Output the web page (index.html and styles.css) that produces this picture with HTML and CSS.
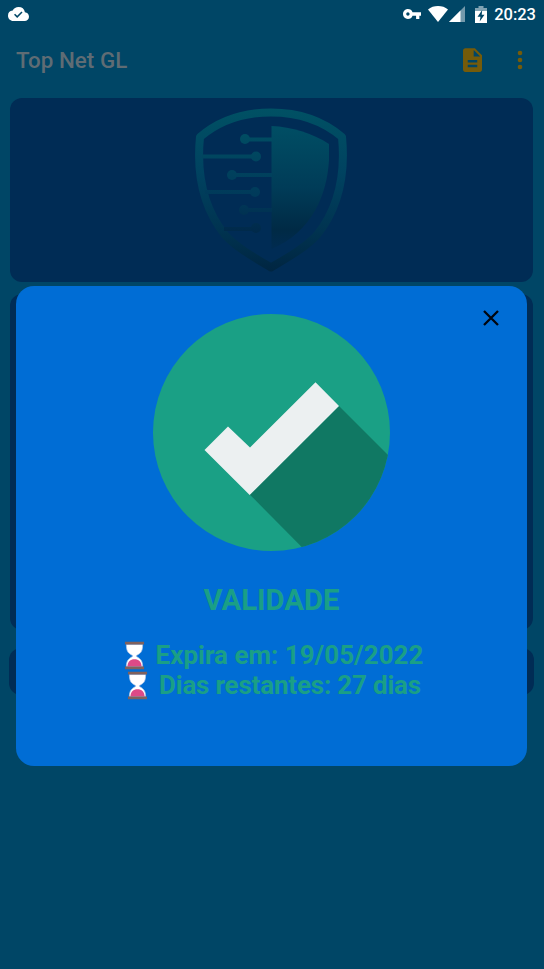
FILE: index.html
```
<!DOCTYPE html>
<html lang="pt">
<head>
    <meta charset="UTF-8">
    <meta name="viewport" content="width=device-width, initial-scale=1.0">
    <title>Top Net GL</title>
    <link rel="stylesheet" href="styles.css">
</head>
<body>
    <div class="status-bar">
        <svg class="cloud" viewBox="0 0 24 16"><path fill="#fff" d="M19.35 6.04A7.49 7.49 0 0 0 12 0C9.11 0 6.6 1.64 5.35 4.04A5.994 5.994 0 0 0 0 10c0 3.31 2.69 6 6 6h13c2.76 0 5-2.24 5-5 0-2.64-2.05-4.78-4.65-4.96z"/><path d="M7.5 8.3l3 3 5.5-5.5" fill="none" stroke="#004666" stroke-width="1.7"/></svg>
        <div class="status-icons">
            <svg class="key" viewBox="1 6 22 12"><path fill="#fff" d="M12.65 10A5.99 5.99 0 0 0 7 6c-3.31 0-6 2.69-6 6s2.69 6 6 6a5.99 5.99 0 0 0 5.65-4H17v4h4v-4h2v-4H12.65zM7 14c-1.1 0-2-.9-2-2s.9-2 2-2 2 .9 2 2-.9 2-2 2z"/></svg>
            <svg class="wifi" viewBox="0 0 20 16"><path fill="#fff" d="M10 16L0 3.4C2.8 1.2 6.2 0 10 0s7.2 1.2 10 3.4z"/></svg>
            <svg class="signal" viewBox="0 0 16 16"><path fill="#fff" fill-opacity=".45" d="M0 16L16 0v16z"/><path fill="#fff" d="M0 16L11.5 4.5V16z"/></svg>
            <svg class="battery" viewBox="0 0 12 17"><path fill="#fff" fill-opacity=".5" d="M0 2h3.500V0h5v2H12v3H0z"/><path fill="#fff" d="M0 5h12v12H0z"/><path fill="#004666" d="M7.200 4L2.500 10.800h3L4.700 15.500 9.500 8.800H6.700z"/></svg>
            <span class="clock">20:23</span>
        </div>
    </div>

    <div class="toolbar">
        <h1>Top Net GL</h1>
        <svg class="doc" viewBox="4 2 16 20"><path fill="#755b0a" d="M14 2H6c-1.1 0-1.990.9-1.990 2L4 20c0 1.100.89 2 1.990 2H18c1.100 0 2-.9 2-2V8l-6-6zm2 16H8v-2h8v2zm0-4H8v-2h8v2zm-3-5V3.500L18.500 9H13z"/></svg>
        <svg class="more" viewBox="0 0 6 20"><g fill="#755b0a"><circle cx="3" cy="3" r="2.300"/><circle cx="3" cy="10" r="2.300"/><circle cx="3" cy="17" r="2.300"/></g></svg>
    </div>

    <div class="cards">
        <div class="card logo-card">
            <svg class="shield" viewBox="190 104 162 170">
                <defs>
                    <linearGradient id="fade" gradientUnits="userSpaceOnUse" x1="0" y1="108" x2="0" y2="272">
                        <stop offset="0" stop-color="#005164"/>
                        <stop offset=".4" stop-color="#004260"/>
                        <stop offset=".75" stop-color="#003350"/>
                        <stop offset="1" stop-color="#002541"/>
                    </linearGradient>
                    <linearGradient id="half" gradientUnits="userSpaceOnUse" x1="0" y1="126" x2="0" y2="248">
                        <stop offset="0" stop-color="#004e64"/>
                        <stop offset=".5" stop-color="#003c58"/>
                        <stop offset=".85" stop-color="#002a45"/>
                        <stop offset="1" stop-color="#002b50"/>
                    </linearGradient>
                    <linearGradient id="lines" gradientUnits="userSpaceOnUse" x1="0" y1="135" x2="0" y2="235">
                        <stop offset="0" stop-color="#004c62"/>
                        <stop offset=".6" stop-color="#003a5a"/>
                        <stop offset="1" stop-color="#002849"/>
                    </linearGradient>
                </defs>
                <path fill="none" stroke="url(#fade)" stroke-width="8" stroke-linejoin="round" d="M271 112.500C245 112.500 220 120 200 137C197 168 201 205 225 235C237 248 255 258 271 267.500C287 258 305 248 317 235C341 205 345 168 342 137C322 120 297 112.500 271 112.500z"/>
                <path fill="url(#half)" d="M271.500 126C292 127 312 133 329 144V160C327 195 312 232 271.500 249z"/>
                <g fill="url(#lines)">
                    <circle cx="245" cy="139" r="5"/><path d="M245 137.500h27v4h-27z"/>
                    <circle cx="256" cy="156.500" r="5"/><path d="M202 154.500h54v4h-54z"/>
                    <circle cx="232" cy="175" r="5"/><path d="M232 173h40v4h-40z"/>
                    <circle cx="255" cy="192" r="5"/><path d="M205 190h50v4h-50z"/>
                    <circle cx="244" cy="210" r="5"/><path d="M244 208h28v4h-28z"/>
                    <circle cx="256" cy="228" r="5"/><path d="M224 227h32v4h-32z"/>
                </g>
            </svg>
        </div>
        <div class="card main-card"></div>
        <div class="card button-card"></div>
    </div>

    <div class="dialog">
        <svg class="close" viewBox="0 0 16 16"><path d="M1 1l14 14M15 1L1 15" stroke="#00060f" stroke-width="2.300"/></svg>
        <svg class="check" viewBox="0 0 237 237">
            <defs><clipPath id="round"><circle cx="118.500" cy="118.500" r="118.500"/></clipPath></defs>
            <circle cx="118.500" cy="118.500" r="118.500" fill="#1aa085"/>
            <path clip-path="url(#round)" fill="#107863" d="M186 92l70 70v95H172.500L96.700 180.500z"/>
            <path fill="#ecf0f1" d="M51.500 136L75 112.500l22 21L162.500 68.300 186 92 96.700 181z"/>
        </svg>
        <h2>VALIDADE</h2>
        <p class="expire">
            <svg class="hourglass" viewBox="0 0 22 29"><path fill="#fff" stroke="#bccbe8" stroke-width=".7" d="M2.500 3h17c0 6-1 9-6.500 11.500v1C18 18 19.500 21 19.500 26h-17C2.500 21 4 18 9 15.500v-1C3.500 12 2.500 9 2.500 3z"/><path fill="#dc4a87" d="M3.500 26c.5-5 3-7.500 7.500-7.500s7 2.500 7.500 7.500z"/><path fill="#80615d" d="M1 0h20v3H1zM1 26h20v3H1z"/></svg>
            <span>Expira em: 19/05/2022</span>
        </p>
        <p class="days">
            <svg class="hourglass" viewBox="0 0 22 29"><path fill="#fff" stroke="#bccbe8" stroke-width=".7" d="M2.500 3h17c0 6-1 9-6.500 11.500v1C18 18 19.500 21 19.500 26h-17C2.500 21 4 18 9 15.500v-1C3.500 12 2.500 9 2.500 3z"/><path fill="#dc4a87" d="M3.500 26c.5-5 3-7.500 7.500-7.500s7 2.500 7.500 7.500z"/><path fill="#80615d" d="M1 0h20v3H1zM1 26h20v3H1z"/></svg>
            <span>Dias restantes: 27 dias</span>
        </p>
    </div>
</body>
</html>
```
FILE: styles.css
```
* {
    box-sizing: border-box;
}

body {
    font-family: Roboto, sans-serif;
    margin: 0;
    height: 969px;
    overflow: hidden;
    position: relative;
    background-color: #004666;
}

svg {
    display: block;
    flex: none;
}

.status-bar {
    display: flex;
    justify-content: space-between;
    align-items: center;
    height: 28px;
    padding: 0 8px;
}

.cloud {
    width: 21px;
    height: 14px;
}

.status-icons {
    display: flex;
    align-items: center;
}

.key {
    width: 18px;
    height: 10px;
    margin-right: 7px;
}

.wifi {
    width: 20px;
    height: 16px;
    margin-right: 1px;
}

.signal {
    width: 16px;
    height: 16px;
    margin-right: 10px;
}

.battery {
    width: 12px;
    height: 17px;
    margin-right: 7px;
}

.clock {
    color: #fff;
    font-size: 16.5px;
    font-weight: 500;
}

.toolbar {
    display: flex;
    align-items: center;
    height: 64px;
    padding: 0 21px 0 16px;
}

.toolbar h1 {
    flex: 1;
    margin: 0;
    color: #5f6c74;
    font-size: 22.4px;
    font-weight: 500;
}

.doc {
    width: 19px;
    height: 24px;
    margin-right: 35px;
}

.more {
    width: 6px;
    height: 20px;
}

.cards {
    padding: 6px 11px 0 10px;
}

.card {
    background-color: #002c55;
    border-radius: 12px;
}

.logo-card {
    display: flex;
    justify-content: center;
    height: 184px;
    padding: 6px 1px 0 0;
}

.shield {
    width: 162px;
    height: 170px;
}

.main-card {
    height: 336px;
    margin-top: 12px;
}

.button-card {
    height: 47px;
    margin: 18px -1px 0;
}

/* dialog over the dimmed screen */
.dialog {
    position: absolute;
    top: 286px;
    left: 16px;
    width: 511px;
    height: 480px;
    padding-top: 28px;
    border-radius: 18px;
    background-color: #006dd5;
    color: #1a9f86;
    text-align: center;
}

.close {
    position: absolute;
    top: 24px;
    right: 28px;
    width: 16px;
    height: 16px;
}

.check {
    width: 237px;
    height: 237px;
    margin: 0 auto;
}

.dialog h2 {
    margin: 31px 0 22px;
    font-size: 29.3px;
    line-height: 36px;
    font-weight: 700;
}

.dialog p {
    display: flex;
    justify-content: center;
    align-items: center;
    gap: 11px;
    margin: 0;
    padding-left: 4px;
    height: 30px;
    font-size: 26px;
    font-weight: 700;
    white-space: nowrap;
}

.dialog .days {
    padding-left: 5px;
    letter-spacing: -0.2px;
}

.hourglass {
    width: 21px;
    height: 29px;
}
```
